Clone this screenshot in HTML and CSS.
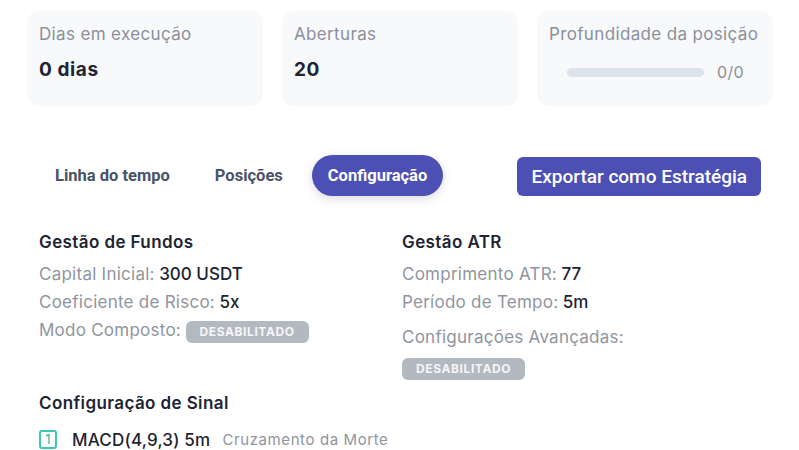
FILE: index.html
```html
<!DOCTYPE html>
<html lang="pt">

<head>
    <meta charset="UTF-8">
    <meta name="viewport" content="width=device-width, initial-scale=1.0">
    <title>Configuração</title>
    <link rel="stylesheet" href="styles.css">
</head>

<body>
    <div class="page">
        <section class="stats">
            <div class="stat-card">
                <p class="stat-label">Dias em execução</p>
                <p class="stat-value">0 dias</p>
            </div>
            <div class="stat-card">
                <p class="stat-label">Aberturas</p>
                <p class="stat-value">20</p>
            </div>
            <div class="stat-card">
                <p class="stat-label">Profundidade da posição</p>
                <div class="depth">
                    <div class="depth-bar"></div>
                    <span class="depth-text">0/0</span>
                </div>
            </div>
        </section>

        <main class="content">
            <div class="toolbar">
                <nav class="tabs">
                    <button class="tab">Linha do tempo</button>
                    <button class="tab">Posições</button>
                    <button class="tab active">Configuração</button>
                </nav>
                <button class="export-button">Exportar como Estratégia</button>
            </div>

            <div class="settings">
                <div class="group">
                    <h3>Gestão de Fundos</h3>
                    <p class="row"><span class="label">Capital Inicial:</span> <b>300 USDT</b></p>
                    <p class="row"><span class="label">Coeficiente de Risco:</span> <b>5x</b></p>
                    <p class="row"><span class="label">Modo Composto:</span> <span class="badge">Desabilitado</span></p>
                </div>
                <div class="group">
                    <h3>Gestão ATR</h3>
                    <p class="row"><span class="label">Comprimento ATR:</span> <b>77</b></p>
                    <p class="row"><span class="label">Período de Tempo:</span> <b>5m</b></p>
                    <p class="row advanced"><span class="label">Configurações Avançadas:</span></p>
                    <span class="badge">Desabilitado</span>
                </div>
            </div>

            <div class="signals">
                <h3>Configuração de Sinal</h3>
                <div class="signal">
                    <span class="signal-index">1</span>
                    <span class="signal-name">MACD(4,9,3) 5m</span>
                    <span class="signal-type">Cruzamento da Morte</span>
                </div>
            </div>
        </main>
    </div>
</body>

</html>
```

FILE: styles.css
```css
body {
    font-family: 'Inter', 'Noto Sans', sans-serif;
    margin: 0;
    padding: 0;
    background-color: #fff;
    color: #1e2433;
}

p,
h3 {
    margin: 0;
}

.page {
    padding: 11px 26px 0 27px;
}

.stats {
    display: grid;
    grid-template-columns: repeat(3, 236px);
    gap: 19px;
}

.stat-card {
    background-color: #f8f9fa;
    border-radius: 12px;
    height: 95px;
    padding: 12px 11px 0 12px;
    box-sizing: border-box;
}

.stat-label {
    font-size: 17px;
    line-height: 22px;
    letter-spacing: 0.35px;
    color: #8a909a;
    white-space: nowrap;
}

.stat-value {
    margin-top: 13px;
    font-size: 19px;
    line-height: 24px;
    font-weight: 700;
    letter-spacing: 0.6px;
}

.depth {
    display: flex;
    align-items: center;
    justify-content: center;
    gap: 13px;
    margin-top: 17px;
}

.depth-bar {
    width: 137px;
    height: 9px;
    border-radius: 5px;
    background-color: #dde3ea;
}

.depth-text {
    font-size: 16px;
    letter-spacing: 0.4px;
    color: #8a909a;
}

.content {
    padding: 49px 12px 0;
}

.toolbar {
    display: flex;
    justify-content: space-between;
    align-items: center;
}

.tabs {
    display: flex;
    gap: 13px;
}

button {
    font-family: 'Roboto', 'Liberation Sans', sans-serif;
    border: none;
    cursor: pointer;
}

.tab {
    background: none;
    color: #4a5366;
    font-size: 16.5px;
    font-weight: 700;
    height: 41px;
    padding: 0 16px;
    border-radius: 21px;
}

.tab.active {
    background-color: #4c4fb3;
    color: #fff;
    box-shadow: 0 3px 10px rgba(60, 60, 120, 0.18);
}

.export-button {
    background-color: #4c4fb3;
    color: #fff;
    font-size: 19px;
    font-weight: 500;
    height: 39px;
    padding: 0 14px;
    border-radius: 6px;
    margin-top: 2px;
}

.settings {
    display: grid;
    grid-template-columns: 1fr 1fr;
    column-gap: 4px;
    margin-top: 34px;
}

h3 {
    font-size: 17px;
    line-height: 24px;
    font-weight: 600;
    letter-spacing: 0.4px;
    margin-bottom: 8px;
}

.row {
    font-size: 16px;
    line-height: 24px;
    color: #8f959e;
    margin-bottom: 4px;
}

.label {
    font-size: 17px;
    letter-spacing: 0.25px;
}

.row b {
    color: #1e2433;
    font-size: 17px;
    font-weight: 500;
}

.advanced {
    margin-top: 11px;
    margin-bottom: 8px;
}

.badge {
    display: inline-block;
    background-color: #b2b9c1;
    color: #f4f6f8;
    font-size: 12px;
    font-weight: 700;
    text-transform: uppercase;
    letter-spacing: 0.6px;
    line-height: 22px;
    padding: 0 14px;
    border-radius: 6px;
    vertical-align: middle;
}

.signals {
    margin-top: 11px;
}

.signals h3 {
    margin-bottom: 15px;
}

.signal {
    display: flex;
    align-items: center;
}

.signal-index {
    width: 14px;
    height: 15px;
    border: 2px solid #3cc9b0;
    border-radius: 3px;
    color: #2fb89f;
    font-size: 13px;
    line-height: 15px;
    text-align: center;
    margin-right: 15px;
}

.signal-name {
    font-size: 17px;
    font-weight: 500;
    letter-spacing: 0.2px;
    margin-right: 12px;
}

.signal-type {
    font-size: 15px;
    letter-spacing: 0.6px;
    color: #8f959e;
}
```
